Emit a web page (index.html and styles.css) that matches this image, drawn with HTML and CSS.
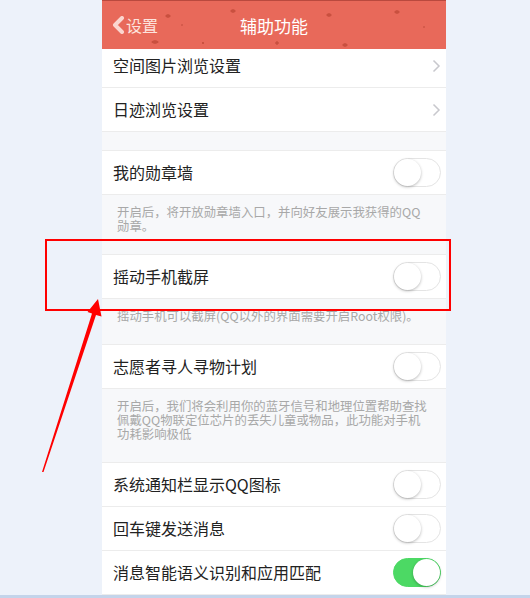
FILE: index.html
```html
<!DOCTYPE html>
<html lang="zh-CN">
<head>
    <meta charset="UTF-8">
    <meta name="viewport" content="width=device-width, initial-scale=1.0">
    <title>辅助功能</title>
    <link rel="stylesheet" href="styles.css">
</head>
<body>

    <div class="screen">
        <div class="header">
            <div class="back">
                <svg class="back-icon" width="13" height="18" viewBox="0 0 13 18">
                    <polyline points="10,2 3,9 10,16" fill="none" stroke="#fbd6cf" stroke-width="4" stroke-linecap="round" stroke-linejoin="round"/>
                </svg>
                <span>设置</span>
            </div>
            <div class="title">辅助功能</div>
        </div>

        <div class="list">
            <div class="group first">
                <div class="row">
                    <span class="label">空间图片浏览设置</span>
                    <svg class="chevron" width="9" height="14" viewBox="0 0 9 14"><polyline points="1.5,1.5 7,7 1.5,12.5" fill="none" stroke="#c8c8cd" stroke-width="1.5"/></svg>
                </div>
                <div class="row">
                    <span class="label">日迹浏览设置</span>
                    <svg class="chevron" width="9" height="14" viewBox="0 0 9 14"><polyline points="1.5,1.5 7,7 1.5,12.5" fill="none" stroke="#c8c8cd" stroke-width="1.5"/></svg>
                </div>
            </div>

            <div class="spacer"></div>

            <div class="group">
                <div class="row">
                    <span class="label">我的勋章墙</span>
                    <span class="toggle"></span>
                </div>
            </div>
            <p class="note">开启后，将开放勋章墙入口，并向好友展示我获得的QQ<br>勋章。</p>

            <div class="group">
                <div class="row">
                    <span class="label">摇动手机截屏</span>
                    <span class="toggle"></span>
                </div>
            </div>
            <p class="note">摇动手机可以截屏(QQ以外的界面需要开启Root权限)。</p>

            <div class="group">
                <div class="row">
                    <span class="label">志愿者寻人寻物计划</span>
                    <span class="toggle"></span>
                </div>
            </div>
            <p class="note">开启后，我们将会利用你的蓝牙信号和地理位置帮助查找<br>佩戴QQ物联定位芯片的丢失儿童或物品，此功能对手机<br>功耗影响极低</p>

            <div class="group">
                <div class="row">
                    <span class="label">系统通知栏显示QQ图标</span>
                    <span class="toggle"></span>
                </div>
                <div class="row">
                    <span class="label">回车键发送消息</span>
                    <span class="toggle"></span>
                </div>
                <div class="row">
                    <span class="label">消息智能语义识别和应用匹配</span>
                    <span class="toggle on"></span>
                </div>
            </div>
        </div>
    </div>

    <div class="bottom-bar"></div>

    <!-- 标注：红框 + 箭头 -->
    <div class="mark-box"></div>
    <svg class="mark-arrow" width="530" height="598" viewBox="0 0 530 598">
        <polygon points="42,472 43.5,472 96,315 101.5,316.5 98,299 87.5,312 92,313.5" fill="#ff0000"/>
    </svg>

</body>
</html>
```

FILE: styles.css
```css
html, body {
    margin: 0;
    padding: 0;
}

body {
    width: 530px;
    height: 598px;
    overflow: hidden;
    position: relative;
    background-color: #edf2fa;
    font-family: "Noto Sans CJK SC", "Noto Sans", sans-serif;
    color: #222;
}

.screen {
    width: 344px;
    margin-left: 102px;
    height: 595px;
    overflow: hidden;
    background-color: #f7f8fa;
}

.header {
    height: 48px;
    border-top: 1px solid #b9493e;
    background-color: #e8695a;
    background-image:
        radial-gradient(3px 2px at 66px 15px, #c9503f 70%, transparent 100%),
        radial-gradient(3px 2px at 131px 10px, #c9503f 70%, transparent 100%),
        radial-gradient(3px 2px at 227px 14px, #c9503f 70%, transparent 100%),
        radial-gradient(3px 2px at 295px 11px, #c9503f 70%, transparent 100%),
        radial-gradient(4px 2px at 53px 41px, #c9503f 70%, transparent 100%),
        radial-gradient(3px 2px at 243px 44px, #c9503f 70%, transparent 100%),
        radial-gradient(2px 2px at 175px 42px, #c9503f 70%, transparent 100%),
        radial-gradient(1px 1px at 101px 42px, #c9503f 70%, transparent 100%),
        radial-gradient(1px 1px at 80px 24px, #d45a4b 70%, transparent 100%),
        radial-gradient(1px 1px at 322px 26px, #d45a4b 70%, transparent 100%);
    display: flex;
    align-items: center;
    position: relative;
}

.back {
    display: flex;
    align-items: center;
    padding-left: 10px;
    color: #fde3dd;
    font-size: 16px;
    gap: 1px;
}

.back-icon {
    display: block;
}

.title {
    position: absolute;
    left: 0;
    right: 0;
    text-align: center;
    color: #fff;
    font-size: 17px;
    pointer-events: none;
}

.list {
    display: flex;
    flex-direction: column;
}

.group {
    background-color: #fff;
    border-top: 1px solid #ececec;
}

.group.first {
    border-top: none;
    margin-top: -5px;
}

.row {
    height: 43px;
    border-bottom: 1px solid #ececec;
    display: flex;
    align-items: center;
    justify-content: space-between;
    padding: 0 5px 0 11px;
}

.label {
    font-size: 16px;
    color: #222;
    margin-top: -2px;
}

.chevron {
    margin-right: 0;
}

.spacer {
    height: 18px;
}

.note {
    margin: 0;
    padding: 10px 2px 21px 15px;
    font-size: 12.4px;
    line-height: 14px;
    color: #a8a8a8;
    white-space: nowrap;
}

.toggle {
    width: 46px;
    height: 27px;
    border-radius: 15px;
    border: 1.5px solid #e4e4e4;
    background-color: #fff;
    position: relative;
}

.toggle::after {
    content: "";
    position: absolute;
    left: 0;
    top: 0;
    width: 27px;
    height: 27px;
    border-radius: 50%;
    background-color: #fff;
    box-shadow: 0 1px 3px rgba(0, 0, 0, 0.28);
}

.toggle.on {
    background-color: #4cd964;
    border-color: #4cd964;
}

.toggle.on::after {
    left: auto;
    right: 0;
}

.bottom-bar {
    height: 3px;
    background-color: #c4d4ea;
}

.mark-box {
    position: absolute;
    left: 45px;
    top: 239px;
    width: 402px;
    height: 68px;
    border: 2px solid #ff0000;
}

.mark-arrow {
    position: absolute;
    left: 0;
    top: 0;
}
```
